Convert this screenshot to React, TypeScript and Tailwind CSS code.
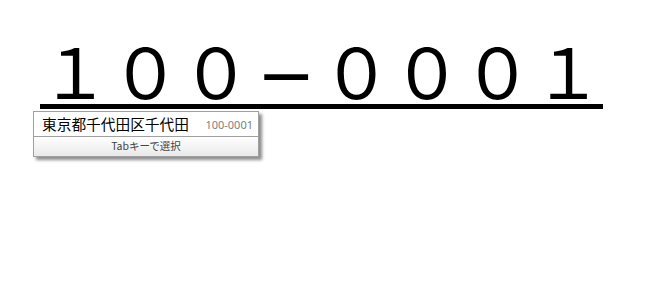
import React from 'react';

export default function App() {
  return (
    <div className="relative min-h-[294px] bg-white pl-10 pt-[34px] font-['Noto_Sans_CJK_JP',sans-serif]">
      {/* 郵便番号の入力欄 */}
      <div className="h-[75px] w-[563px] whitespace-nowrap border-b-[5px] border-black text-[70px] leading-[70px] tracking-[0.5px] text-black">
        １００<span className="inline-block w-[70px] text-center font-['DejaVu_Sans',sans-serif] leading-[40px]">−</span>０００１
      </div>

      {/* 住所候補のポップアップ */}
      <div className="absolute left-[33px] top-[111px] w-[226px] border border-[#a0a0a0] bg-white shadow-[3px_3px_3px_rgba(0,0,0,0.45)]">
        <div className="flex h-[24px] items-center justify-between pl-[8px] pr-[5px]">
          <span className="text-[14.7px] leading-none text-black">東京都千代田区千代田</span>
          <span className="font-['Noto_Sans',sans-serif] text-[11px] leading-none text-[#808080]">100-0001</span>
        </div>
        <div className="flex h-[20px] items-center justify-center border-t border-[#a0a0a0] bg-gradient-to-b from-white to-[#e9e9e9] text-[10.5px] leading-none text-[#444]">
          Tabキーで選択
        </div>
      </div>
    </div>
  );
}
